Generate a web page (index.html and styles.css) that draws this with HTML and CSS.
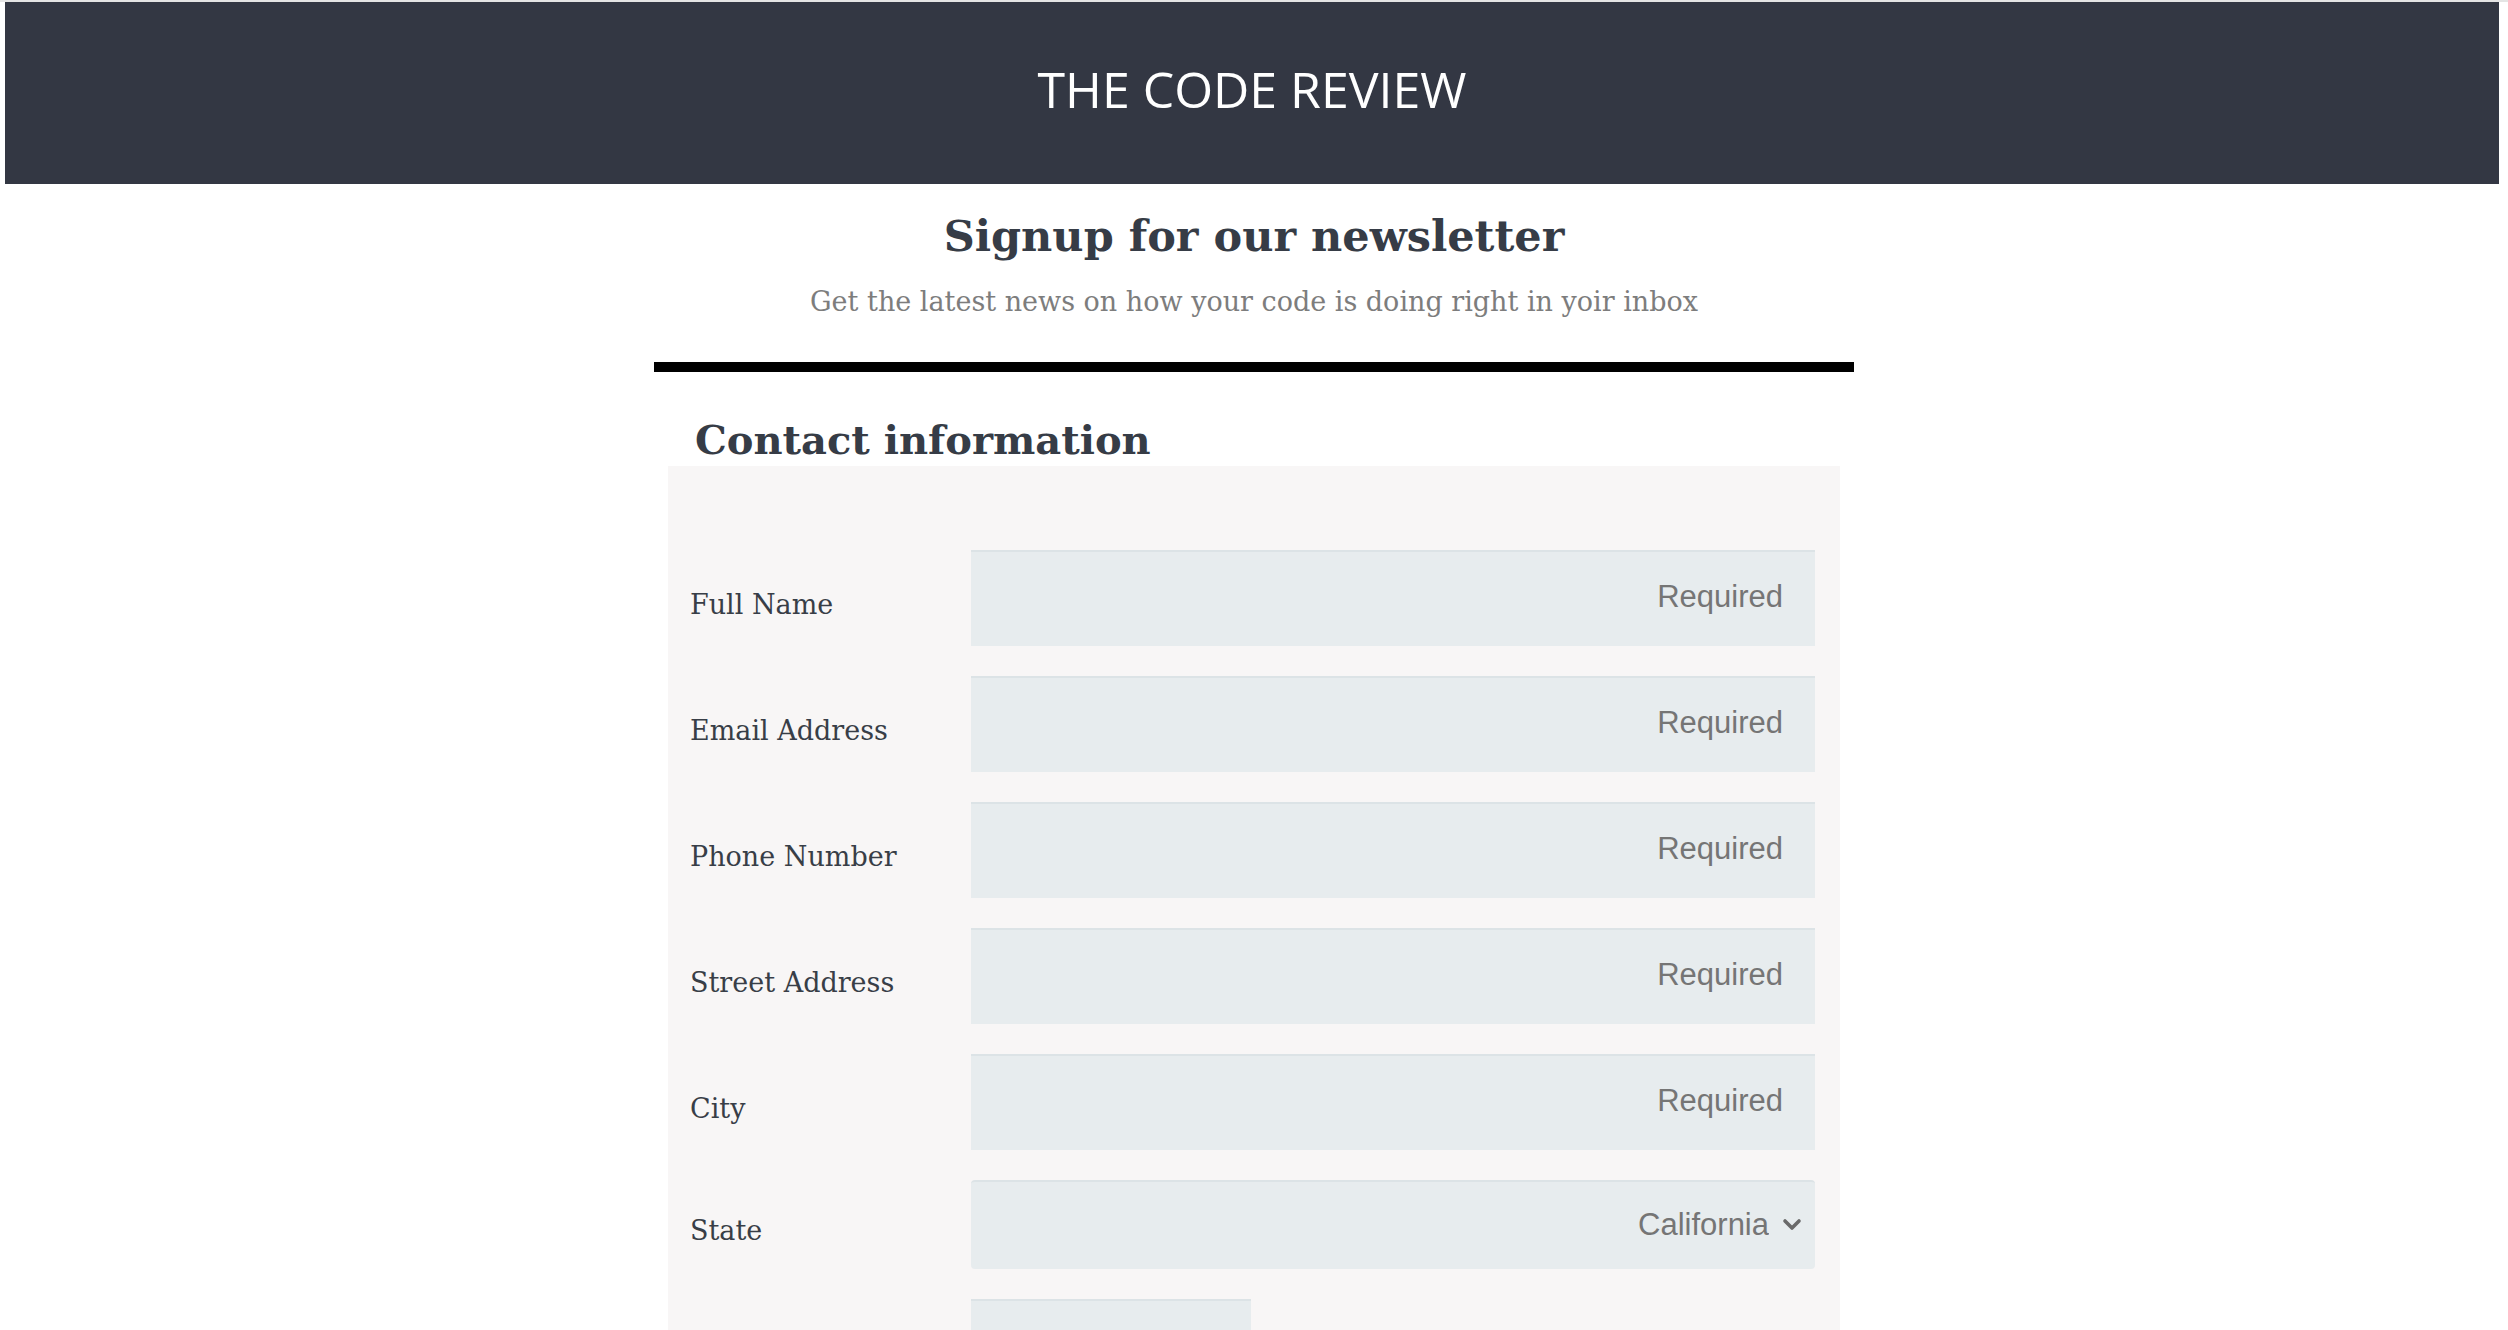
FILE: index.html
```html
<!DOCTYPE html>
<html lang="en">
<head>
    <meta charset="UTF-8">
    <meta name="viewport" content="width=device-width, initial-scale=1.0">
    <title>The Code Review - Newsletter</title>
    <link rel="stylesheet" href="styles.css">
</head>
<body>

    <div class="header">
        <h1>THE CODE REVIEW</h1>
    </div>

    <div class="container">
        <div class="intro">
            <h2>Signup for our newsletter</h2>
            <p>Get the latest news on how your code is doing right in yoir inbox</p>
        </div>

        <hr class="divider">

        <h3>Contact information</h3>
        <form class="contact-form">
            <div class="row">
                <label for="full-name">Full Name</label>
                <input type="text" id="full-name" placeholder="Required">
            </div>
            <div class="row">
                <label for="email">Email Address</label>
                <input type="email" id="email" placeholder="Required">
            </div>
            <div class="row">
                <label for="phone">Phone Number</label>
                <input type="tel" id="phone" placeholder="Required">
            </div>
            <div class="row">
                <label for="street">Street Address</label>
                <input type="text" id="street" placeholder="Required">
            </div>
            <div class="row">
                <label for="city">City</label>
                <input type="text" id="city" placeholder="Required">
            </div>
            <div class="row">
                <label for="state">State</label>
                <div class="select-wrap">
                    <select id="state">
                        <option>California</option>
                        <option>Nevada</option>
                        <option>Oregon</option>
                        <option>Washington</option>
                    </select>
                    <svg class="chevron" width="20" height="14" viewBox="0 0 20 14">
                        <path d="M3 4 L10 11 L17 4" fill="none" stroke="#6a6a6a" stroke-width="3.6" stroke-linecap="round" stroke-linejoin="round"/>
                    </svg>
                </div>
            </div>
            <div class="row">
                <label for="zip">Zip Code</label>
                <input type="text" id="zip" class="short-input">
            </div>
        </form>
    </div>

</body>
</html>
```

FILE: styles.css
```css
body {
    margin: 0;
    padding: 0;
    border-top: 2px solid #e4e4e4;
    background-color: #fff;
    font-family: 'DejaVu Serif', serif;
    color: #363c46;
}
.header {
    display: flex;
    justify-content: center;
    align-items: center;
    height: 182px;
    margin: 0 9px 0 5px;
    background-color: #333743;
}
.header h1 {
    margin: 0 0 8px;
    color: #fff;
    font-family: 'Open Sans', sans-serif;
    font-weight: 500;
    font-size: 50px;
}
.container {
    width: 1200px;
    margin: 0 auto;
    overflow: hidden;
}
.intro {
    text-align: center;
}
.intro h2 {
    margin: 22px 0 0;
    font-size: 43px;
    line-height: 60px;
    font-weight: bold;
    color: #363c46;
}
.intro p {
    margin: 16px 0 0;
    font-size: 27px;
    line-height: 40px;
    color: #7d7d7d;
}
.divider {
    height: 10px;
    margin: 40px 0 0;
    border: none;
    background-color: #000;
}
h3 {
    margin: 41px 0 0 41px;
    font-size: 40px;
    line-height: 53px;
    font-weight: bold;
    color: #363c46;
}
.contact-form {
    margin: 0 14px;
    padding: 84px 25px 40px 22px;
    background-color: #f8f6f6;
}
.row {
    display: flex;
    align-items: center;
    margin-bottom: 30px;
}
.row label {
    width: 281px;
    flex-shrink: 0;
    padding-top: 12px;
    font-size: 27px;
    color: #383e47;
}
input[type="text"], input[type="email"], input[type="tel"] {
    flex: 1;
    height: 96px;
    box-sizing: border-box;
    padding: 0 32px 4px 20px;
    border: none;
    border-top: 2px solid #dce3e6;
    background-color: #e7ecee;
    font-family: 'Liberation Sans', Arial, sans-serif;
    font-size: 31px;
    text-align: right;
    outline: none;
}
input::placeholder {
    color: #757575;
}
input.short-input {
    flex: none;
    width: 280px;
}
.select-wrap {
    flex: 1;
    position: relative;
}
select {
    display: block;
    width: 100%;
    height: 89px;
    padding: 0 46px 2px 20px;
    border: none;
    border-top: 2px solid #dce3e6;
    border-radius: 4px;
    background-color: #e7ecee;
    font-family: 'Liberation Sans', Arial, sans-serif;
    font-size: 31px;
    color: #757575;
    text-align-last: right;
    appearance: none;
    -webkit-appearance: none;
    outline: none;
}
.chevron {
    position: absolute;
    right: 13px;
    top: 37px;
    pointer-events: none;
}
```
